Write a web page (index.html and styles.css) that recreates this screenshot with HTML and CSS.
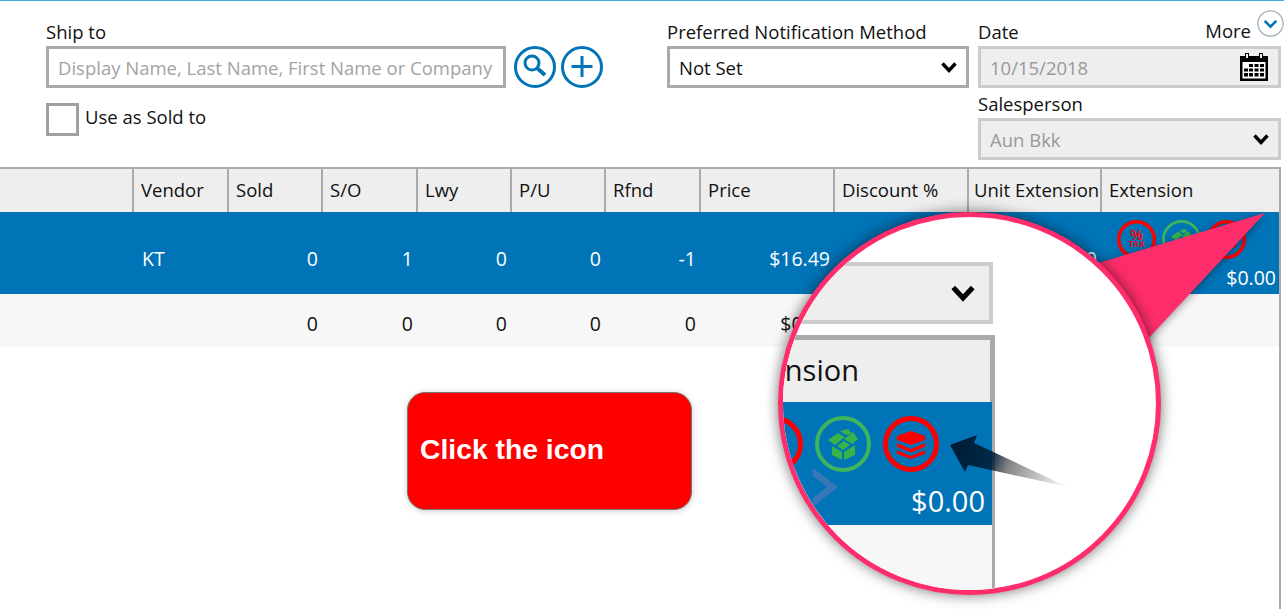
FILE: index.html
```html
<!DOCTYPE html>
<html lang="en">
<head>
    <meta charset="UTF-8">
    <title>Order line</title>
    <link rel="stylesheet" href="styles.css">
</head>
<body>
<svg class="defs" width="0" height="0">
    <symbol id="chevron" viewBox="0 0 16 11">
        <path d="M1.5 1.5 L8 8.5 L14.5 1.5" fill="none" stroke="#000" stroke-width="3.4"/>
    </symbol>
    <symbol id="box" viewBox="0 0 56 56">
        <circle cx="28" cy="28" r="26" fill="none" stroke="#3cb55c" stroke-width="4"/>
        <g fill="#37b34a">
            <path d="M13 24 L23 17 L30 21 L20 29Z"/>
            <path d="M25 15 L33 13 L37 18 L31 19Z"/>
            <path d="M33 20 L38 16 L43 23 L37 28 L29 23Z"/>
            <path d="M22 30 L29 25 L35 29 L28 34Z"/>
            <path d="M17 30 L27 36 V44 L17 39Z"/>
            <path d="M29 36 L40 29 V39 L29 44Z"/>
        </g>
    </symbol>
    <symbol id="stack" viewBox="0 0 56 56">
        <circle cx="28" cy="28" r="25.500" fill="none" stroke="#f00" stroke-width="5"/>
        <g fill="#f00">
            <path d="M28 15 L42 20 V24 L28 29 L14 24 V20Z"/>
            <path d="M14 27 L28 33 L42 27 V31 L28 36.500 L14 31Z"/>
            <path d="M14 34 L28 40 L42 34 V38 L28 43 L14 38Z"/>
        </g>
    </symbol>
</svg>

<div class="top-line"></div>

<div class="form-top">
    <div class="ship-col">
        <div class="field-label">Ship to</div>
        <div class="ship-row">
            <div class="box search-box">Display Name, Last Name, First Name or Company</div>
            <svg class="round-btn" viewBox="0 0 42 42">
                <circle cx="21" cy="21" r="19.500" fill="none" stroke="#0074b7" stroke-width="3"/>
                <circle cx="18" cy="17" r="7" fill="none" stroke="#0074b7" stroke-width="3"/>
                <path d="M23 22 L31 29" stroke="#0074b7" stroke-width="4"/>
            </svg>
            <svg class="round-btn" viewBox="0 0 42 42">
                <circle cx="21" cy="21" r="19.500" fill="none" stroke="#0074b7" stroke-width="3"/>
                <path d="M21 10 V31 M10.500 20.500 H31.500" stroke="#0074b7" stroke-width="3"/>
            </svg>
        </div>
        <div class="check-row">
            <div class="check"></div>
            <div>Use as Sold to</div>
        </div>
    </div>

    <div class="notify-col">
        <div class="field-label">Preferred Notification Method</div>
        <div class="box select-box">
            Not Set
            <svg class="chev"><use href="#chevron"/></svg>
        </div>
    </div>

    <div class="date-col">
        <div class="date-head">
            <div class="field-label">Date</div>
            <div class="more">
                More
                <svg class="more-btn" viewBox="0 0 30 30">
                    <circle cx="15" cy="15" r="14" fill="#fff" stroke="#a9b4bb" stroke-width="1.500"/>
                    <path d="M8.500 12 L15 18.500 L21.500 12" fill="none" stroke="#0074b7" stroke-width="2.800"/>
                </svg>
            </div>
        </div>
        <div class="box disabled-box">
            10/15/2018
            <svg class="calendar" viewBox="0 0 28 28">
                <path d="M0 3 H5 V0 H9 V3 H19 V0 H23 V3 H28 V28 H0Z" fill="#000"/>
                <path d="M6 1 H8 V5 H6Z M20 1 H22 V5 H20Z" fill="#eee"/>
                <path d="M2.500 9 H25.500 V25.500 H2.500Z" fill="#fff"/>
                <path d="M9 11 H13 V14 H9Z M14.500 11 H18.500 V14 H14.500Z M20 11 H24 V14 H20Z M4 15.500 H8 V18.500 H4Z M9 15.500 H13 V18.500 H9Z M20 15.500 H24 V18.500 H20Z M14.500 15.500 H18.500 V18.500 H14.500Z M4 20 H8 V23.500 H4Z M9 20 H13 V23.500 H9Z M14.500 20 H18.500 V23.500 H14.500Z M20 20 H24 V23.500 H20Z" fill="#000"/>
            </svg>
        </div>
        <div class="field-label sales-label">Salesperson</div>
        <div class="box disabled-box">
            Aun Bkk
            <svg class="chev"><use href="#chevron"/></svg>
        </div>
    </div>
</div>

<div class="grid">
    <div class="row head-row">
        <div class="cell"></div>
        <div class="cell">Vendor</div>
        <div class="cell">Sold</div>
        <div class="cell">S/O</div>
        <div class="cell">Lwy</div>
        <div class="cell">P/U</div>
        <div class="cell">Rfnd</div>
        <div class="cell">Price</div>
        <div class="cell">Discount %</div>
        <div class="cell tight">Unit Extension</div>
        <div class="cell">Extension</div>
    </div>
    <div class="row blue-row">
        <div></div>
        <div class="val left">KT</div>
        <div class="val">0</div>
        <div class="val">1</div>
        <div class="val">0</div>
        <div class="val">0</div>
        <div class="val">-1</div>
        <div class="val">$16.49</div>
        <div class="val"></div>
        <div class="val">$0.00</div>
        <div class="ext-cell">
            <div class="row-icons">
                <svg class="row-icon" viewBox="0 0 56 56">
                    <circle cx="28" cy="28" r="25.500" fill="none" stroke="#f00" stroke-width="5"/>
                    <text x="28" y="28" class="tax-pct">%</text>
                    <text x="28" y="39" class="tax-word">TAX</text>
                </svg>
                <svg class="row-icon"><use href="#box"/></svg>
                <svg class="row-icon"><use href="#stack"/></svg>
            </div>
            <div class="ext-total">$0.00</div>
        </div>
    </div>
    <div class="row total-row">
        <div></div>
        <div></div>
        <div class="val">0</div>
        <div class="val">0</div>
        <div class="val">0</div>
        <div class="val">0</div>
        <div class="val">0</div>
        <div class="val">$0.00</div>
    </div>
</div>

<div class="note">Click the icon</div>

<svg class="pointer" viewBox="0 0 180 140">
    <path d="M175 1 L5 52 L55 130Z" fill="#ff2d6b"/>
</svg>

<div class="lens">
    <div class="lens-view">
        <div class="lens-select">
            <svg class="lens-chev"><use href="#chevron"/></svg>
        </div>
        <div class="lens-grid">
            <div class="lens-head">Extension</div>
            <div class="lens-blue">
                <div class="lens-icons">
                    <svg class="lens-icon" viewBox="0 0 56 56">
                        <circle cx="28" cy="28" r="25.500" fill="none" stroke="#f00" stroke-width="5"/>
                    </svg>
                    <svg class="lens-icon"><use href="#box"/></svg>
                    <svg class="lens-icon"><use href="#stack"/></svg>
                </div>
                <div class="lens-total">$0.00</div>
                <svg class="ghost" viewBox="0 0 25 39">
                    <path d="M0 0 L25 19 L0 39 V30 L14 19 L0 8Z" fill="#6d78b8" opacity=".5"/>
                </svg>
            </div>
        </div>
    </div>
    <svg class="lens-arrow" viewBox="0 0 120 56">
        <defs>
            <linearGradient id="fade" gradientUnits="userSpaceOnUse" x1="0" y1="10" x2="118" y2="53">
                <stop offset="0" stop-color="#001a33"/>
                <stop offset=".35" stop-color="#00223f" stop-opacity=".92"/>
                <stop offset=".5" stop-color="#222" stop-opacity=".55"/>
                <stop offset="1" stop-color="#333" stop-opacity="0"/>
            </linearGradient>
        </defs>
        <path d="M0 11 L27 1 L24 9 L118 53 L18 31 L15 38Z" fill="url(#fade)"/>
    </svg>
</div>
</body>
</html>
```

FILE: styles.css
```css
html,body
{
    margin:0;
    height:609px;
    overflow:hidden;
}
body
{
    position:relative;
    background-color:white;
    color:#111;
    font-family:"Open Sans",sans-serif;
    font-size:18.5px;
}
.defs
{
    position:absolute;
}
.top-line
{
    height:1px;
    background-color:#4aa8e0;
}

/* form above the grid */
.form-top
{
    display:flex;
    height:166px;
    padding-left:46px;
    box-sizing:border-box;
}
.ship-col
{
    width:621px;
    padding-top:19px;
}
.notify-col
{
    width:311px;
    padding-top:19px;
}
.date-col
{
    width:303px;
    padding-top:19px;
}
.field-label
{
    height:26px;
    line-height:24px;
}
.box
{
    display:flex;
    align-items:center;
    justify-content:space-between;
    height:42px;
    box-sizing:border-box;
    border:3px solid #aaa;
    padding:0 9px;
}
.ship-row
{
    display:flex;
    align-items:center;
}
.search-box
{
    width:460px;
    color:#a3a3a3;
    white-space:nowrap;
    margin-right:8px;
}
.round-btn
{
    width:42px;
    height:42px;
    margin-right:5px;
}
.check-row
{
    display:flex;
    align-items:flex-start;
    margin-top:15px;
    gap:6px;
    line-height:28px;
}
.check
{
    width:33px;
    height:33px;
    box-sizing:border-box;
    border:3px solid #a0a0a0;
}
.select-box
{
    width:302px;
}
.chev
{
    width:16px;
    height:11px;
    margin-right:0;
}
.date-head
{
    display:flex;
    justify-content:space-between;
}
.more
{
    display:flex;
    align-items:center;
    height:26px;
    margin-top:-3px;
    gap:6px;
    margin-right:-3px;
}
.more-btn
{
    width:27px;
    height:27px;
    margin-top:-13px;
}
.disabled-box
{
    background-color:#eee;
    border-color:#ccc;
    color:#999;
}
.calendar
{
    width:28px;
    height:28px;
    margin-right:1px;
}
.sales-label
{
    margin-top:4px;
}

/* grid */
.grid
{
    width:1281px;
    height:442px;
    box-sizing:border-box;
    border-right:2px solid #aaa;
}
.row
{
    display:grid;
    grid-template-columns:132px 95px 94px 95px 94px 94px 95px 134px 134px 133px 178px;
}
.head-row
{
    height:45px;
    box-sizing:border-box;
    background-color:#eee;
    border-top:2px solid #aaa;
}
.cell
{
    display:flex;
    align-items:center;
    border-left:2px solid #aaa;
    padding:0 0 2px 7px;
    white-space:nowrap;
    overflow:hidden;
}
.cell:first-child
{
    border-left:none;
}
.cell.tight
{
    padding-left:5px;
}
.blue-row
{
    height:82px;
    background-color:#0074b7;
    color:white;
}
.total-row
{
    height:53px;
    background-color:#f7f7f7;
}
.val
{
    display:flex;
    align-items:center;
    justify-content:flex-end;
    padding-right:3px;
    font-size:19.5px;
}
.blue-row .val
{
    padding-top:10px;
}
.total-row .val
{
    padding-top:6px;
}
.blue-row .val.left
{
    justify-content:flex-start;
    padding-left:10px;
}
.ext-cell
{
    display:flex;
    flex-direction:column;
    align-items:flex-end;
}
.row-icons
{
    display:flex;
    gap:6px;
    align-self:flex-start;
    margin-top:8px;
    margin-left:17px;
}
.row-icon
{
    width:39px;
    height:39px;
}
.ext-total
{
    padding-right:2px;
    margin-top:5px;
    font-size:19.5px;
}
.tax-pct
{
    font-family:"Liberation Sans",sans-serif;
    font-weight:bold;
    font-size:20px;
    text-anchor:middle;
    fill:#f00;
}
.tax-word
{
    font-family:"Liberation Sans",sans-serif;
    font-weight:bold;
    font-size:12px;
    text-anchor:middle;
    fill:#f00;
}

/* callouts on top of the page */
.note
{
    position:absolute;
    left:407px;
    top:392px;
    width:285px;
    height:118px;
    box-sizing:border-box;
    display:flex;
    align-items:center;
    padding-left:12px;
    padding-bottom:3px;
    background-color:red;
    border:1px solid #777;
    border-radius:18px;
    box-shadow:0 1px 6px rgba(0,0,0,.2);
    color:white;
    font-family:"Liberation Sans",sans-serif;
    font-weight:bold;
    font-size:28.3px;
}
.pointer
{
    position:absolute;
    left:1090px;
    top:212px;
    width:180px;
    height:140px;
    filter:drop-shadow(-2px 3px 5px rgba(0,0,0,.45));
}
.lens
{
    position:absolute;
    left:778px;
    top:212px;
    width:383px;
    height:383px;
    box-sizing:border-box;
    border:5px solid #ff2d6b;
    border-radius:50%;
    overflow:hidden;
    background-color:white;
    box-shadow:0 0 14px rgba(0,0,0,.55);
}
.lens-view
{
    padding-top:45px;
}
.lens-select
{
    display:flex;
    align-items:center;
    justify-content:flex-end;
    width:210px;
    height:62px;
    box-sizing:border-box;
    border:4px solid #ccc;
    background-color:#eee;
    padding-right:14px;
}
.lens-chev
{
    width:24px;
    height:17px;
}
.lens-grid
{
    width:212px;
    height:300px;
    margin-top:11px;
    box-sizing:border-box;
    border-right:3px solid #aaa;
    background-color:#f7f7f7;
}
.lens-head
{
    display:flex;
    align-items:center;
    justify-content:flex-end;
    height:67px;
    box-sizing:border-box;
    border-top:5px solid #aaa;
    border-right:2px solid #aaa;
    background-color:#eee;
    padding:0 131px 4px 0;
    font-size:29px;
    white-space:nowrap;
}
.lens-blue
{
    position:relative;
    height:123px;
    box-sizing:border-box;
    background-color:#0074b7;
    padding-top:14px;
    color:white;
}
.lens-icons
{
    display:flex;
    justify-content:flex-end;
    gap:12px;
    padding-right:53px;
}
.lens-icon
{
    width:56px;
    height:56px;
    flex:none;
}
.lens-total
{
    text-align:right;
    padding-right:7px;
    margin-top:11px;
    font-size:29px;
    line-height:36px;
}
.ghost
{
    position:absolute;
    left:30px;
    top:66px;
    width:25px;
    height:39px;
}
.lens-arrow
{
    position:absolute;
    left:167px;
    top:217px;
    width:120px;
    height:56px;
}
```
